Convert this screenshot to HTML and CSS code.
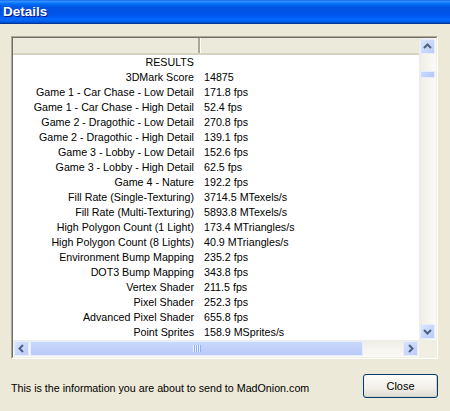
FILE: index.html
```html
<!DOCTYPE html>
<html lang="en">
<head>
  <meta charset="UTF-8">
  <title>Details</title>
  <link rel="stylesheet" href="styles.css">
</head>
<body>

  <div class="window">
    <div class="titlebar">Details</div>

    <div class="frame">
      <div class="frame-in">
        <div class="list">
          <div class="list-head">
            <div class="hcell first"></div>
            <div class="hcell"></div>
          </div>
          <div class="rows">
            <div class="row"><span class="label">RESULTS</span><span class="value"></span></div>
            <div class="row"><span class="label">3DMark Score</span><span class="value">14875</span></div>
            <div class="row"><span class="label">Game 1 - Car Chase - Low Detail</span><span class="value">171.8 fps</span></div>
            <div class="row"><span class="label">Game 1 - Car Chase - High Detail</span><span class="value">52.4 fps</span></div>
            <div class="row"><span class="label">Game 2 - Dragothic - Low Detail</span><span class="value">270.8 fps</span></div>
            <div class="row"><span class="label">Game 2 - Dragothic - High Detail</span><span class="value">139.1 fps</span></div>
            <div class="row"><span class="label">Game 3 - Lobby - Low Detail</span><span class="value">152.6 fps</span></div>
            <div class="row"><span class="label">Game 3 - Lobby - High Detail</span><span class="value">62.5 fps</span></div>
            <div class="row"><span class="label">Game 4 - Nature</span><span class="value">192.2 fps</span></div>
            <div class="row"><span class="label">Fill Rate (Single-Texturing)</span><span class="value">3714.5 MTexels/s</span></div>
            <div class="row"><span class="label">Fill Rate (Multi-Texturing)</span><span class="value">5893.8 MTexels/s</span></div>
            <div class="row"><span class="label">High Polygon Count (1 Light)</span><span class="value">173.4 MTriangles/s</span></div>
            <div class="row"><span class="label">High Polygon Count (8 Lights)</span><span class="value">40.9 MTriangles/s</span></div>
            <div class="row"><span class="label">Environment Bump Mapping</span><span class="value">235.2 fps</span></div>
            <div class="row"><span class="label">DOT3 Bump Mapping</span><span class="value">343.8 fps</span></div>
            <div class="row"><span class="label">Vertex Shader</span><span class="value">211.5 fps</span></div>
            <div class="row"><span class="label">Pixel Shader</span><span class="value">252.3 fps</span></div>
            <div class="row"><span class="label">Advanced Pixel Shader</span><span class="value">655.8 fps</span></div>
            <div class="row"><span class="label">Point Sprites</span><span class="value">158.9 MSprites/s</span></div>
          </div>
        </div>

        <!-- vertical scrollbar -->
        <div class="vscroll">
          <div class="sbtn">
            <svg width="15" height="15" viewBox="0 0 15 15"><polyline points="4,9 7.5,5.5 11,9" /></svg>
          </div>
          <div class="vtrack"><div class="vthumb"></div></div>
          <div class="sbtn">
            <svg width="15" height="15" viewBox="0 0 15 15"><polyline points="4,6 7.5,9.5 11,6" /></svg>
          </div>
        </div>

        <!-- horizontal scrollbar -->
        <div class="hscroll">
          <div class="sbtn">
            <svg width="15" height="15" viewBox="0 0 15 15"><polyline points="9,4 5.5,7.5 9,11" /></svg>
          </div>
          <div class="hthumb"><span class="grip"></span></div>
          <div class="htrack"></div>
          <div class="sbtn">
            <svg width="15" height="15" viewBox="0 0 15 15"><polyline points="6,4 9.5,7.5 6,11" /></svg>
          </div>
        </div>

        <div class="corner"></div>
      </div>
    </div>

    <div class="footer">
      <p class="note">This is the information you are about to send to MadOnion.com</p>
      <button class="close-btn">Close</button>
    </div>
  </div>

</body>
</html>
```

FILE: styles.css
```css
body {
  margin: 0;
  font-family: "Liberation Sans", Arial, sans-serif;
  font-size: 10.7px;
  color: #000;
  background-color: #ece9d8;
}

.window {
  width: 450px;
  height: 411px;
  background-color: #ece9d8;
  overflow: hidden;
}

/* XP blue title bar */
.titlebar {
  height: 24px;
  line-height: 24px;
  padding-left: 3px;
  color: #fff;
  font-weight: bold;
  font-size: 13.5px;
  text-shadow: 1px 1px #0a1883;
  background: linear-gradient(#0058ee 0%, #3a93ff 4%, #288eff 8%, #127dff 12%, #036ffc 16%, #0262ee 22%, #0057e5 30%, #0054e3 40%, #0055eb 60%, #005bf5 70%, #026afe 80%, #0062ef 88%, #0052d6 93%, #0040ab 96%, #003092 100%);
}

/* sunken list frame */
.frame {
  margin: 12px 0 0 11px;
  width: 427px;
  height: 323px;
  box-sizing: border-box;
  border: 1px solid;
  border-color: #aca899 #fff #fff #aca899;
}

.frame-in {
  height: 100%;
  box-sizing: border-box;
  border: 1px solid;
  border-color: #716f64 #f1efe2 #f1efe2 #716f64;
  display: grid;
  grid-template-columns: 406px 17px;
  grid-template-rows: 302px 17px;
  background-color: #fff;
}

.list {
  overflow: hidden;
}

.list-head {
  display: flex;
  height: 17px;
  box-sizing: border-box;
  background-color: #ebeadb;
  border-bottom: 2px solid #d6d2c2;
}

.hcell {
  flex: 1;
  border-left: 1px solid #fff;
}

.hcell.first {
  flex: 0 0 185px;
  border-left: none;
  border-right: 2px solid #aca899;
}

.row {
  display: grid;
  grid-template-columns: 187px 1fr;
  height: 15px;
  line-height: 15px;
  white-space: nowrap;
}

.label {
  text-align: right;
  padding-right: 6px;
}

.value {
  padding-left: 4px;
}

/* scrollbars */
.sbtn {
  flex: 0 0 auto;
  width: 15px;
  height: 15px;
  margin: 1px;
  border-radius: 2px;
  background: linear-gradient(135deg, #dbe5fd, #b7caf7);
  box-shadow: inset 0 0 0 1px #e6edfd;
}

.sbtn svg {
  display: block;
}

.sbtn polyline {
  fill: none;
  stroke: #4d6185;
  stroke-width: 2;
}

.vscroll {
  display: flex;
  flex-direction: column;
  background: linear-gradient(90deg, #eeede5, #fbfaf6);
}

.vtrack {
  flex: 1;
}

.vthumb {
  margin: 16px 1px 0 1px;
  height: 7px;
  border-radius: 2px;
  background: linear-gradient(90deg, #cad8fc, #b4c8f6);
  box-shadow: inset 0 0 0 1px #e6edfd;
}

.hscroll {
  display: flex;
  background: linear-gradient(#eeede5, #fbfaf6);
}

.hthumb {
  flex: 0 0 333px;
  margin: 1px 0;
  border-radius: 2px;
  background: linear-gradient(#cbd9fc, #b5c9f7);
  box-shadow: inset 0 0 0 1px #e6edfd;
  display: flex;
  justify-content: center;
  align-items: center;
}

.grip {
  width: 8px;
  height: 7px;
  background: repeating-linear-gradient(90deg, #eef4fe 0 1px, #8cb0f8 1px 2px);
}

.htrack {
  flex: 1;
}

.corner {
  background-color: #f1efe2;
}

/* bottom line */
.footer {
  display: flex;
  justify-content: space-between;
  align-items: flex-start;
  padding: 15px 12px 0 11px;
}

.note {
  margin: 0;
  padding-top: 8px;
}

.close-btn {
  width: 75px;
  height: 24px;
  font-family: inherit;
  font-size: 11px;
  color: #000;
  border: 1px solid #003c74;
  border-radius: 3px;
  background: linear-gradient(#fdfdfb, #f1efe7 60%, #dedbd0);
  box-shadow: inset -1px -1px #d6d0c5;
  cursor: pointer;
}
```
